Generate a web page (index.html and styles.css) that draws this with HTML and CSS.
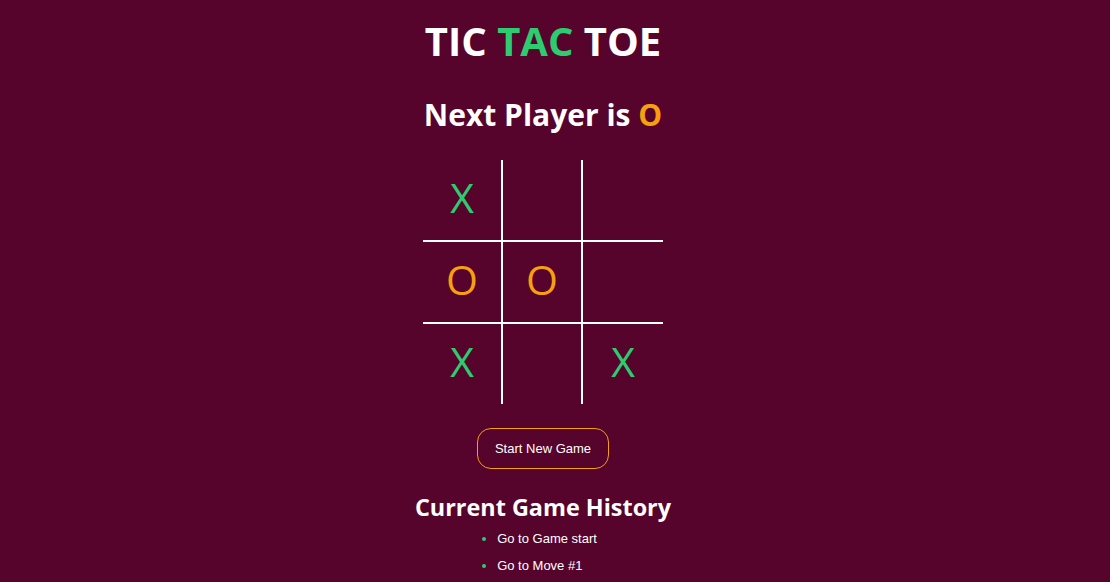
FILE: index.html
```html
<!DOCTYPE html>
<html lang="en">
<head>
<meta charset="utf-8">
<title>Tic Tac Toe</title>
<link rel="stylesheet" href="styles.css">
</head>
<body>
<main class="app">
  <h1 class="title">TIC <span class="green">TAC</span> TOE</h1>
  <h2 class="status">Next Player is <span class="orange">O</span></h2>
  <div class="board">
    <div class="cell b-r b-b x">X</div>
    <div class="cell b-r b-b"></div>
    <div class="cell b-b"></div>
    <div class="cell b-r b-b o">O</div>
    <div class="cell b-r b-b o">O</div>
    <div class="cell b-b"></div>
    <div class="cell b-r x">X</div>
    <div class="cell b-r"></div>
    <div class="cell x">X</div>
  </div>
  <button class="btn">Start New Game</button>
  <h2 class="history-title">Current Game History</h2>
  <ul class="history">
    <li>Go to Game start</li>
    <li>Go to Move #1</li>
  </ul>
</main>
</body>
</html>
```
FILE: styles.css
```css
html, body {
  margin: 0;
  padding: 0;
  background: #56042b;
  color: #ffffff;
}
.app {
  display: flex;
  flex-direction: column;
  align-items: center;
  padding-right: 24px;
  font-family: "Open Sans", sans-serif;
}
.title {
  margin: 15px 0 0;
  font-size: 40px;
  font-weight: 700;
  line-height: 52px;
}
.green { color: #2ecc71; }
.orange { color: #f5a00f; }
.status {
  margin: 28px 0 0;
  font-size: 30px;
  font-weight: 700;
  line-height: 40px;
}
.board {
  margin-top: 25px;
  display: grid;
  grid-template-columns: 80px 80px 80px;
  grid-template-rows: 82px 82px 80px;
}
.cell {
  box-sizing: border-box;
  display: flex;
  align-items: center;
  justify-content: center;
  padding-bottom: 6px;
  font-size: 41px;
  font-weight: 400;
}
.b-r { border-right: 2px solid #ffffff; }
.b-b { border-bottom: 2px solid #ffffff; }
.x { color: #2ecc71; }
.o { color: #f5a00f; }
.btn {
  margin-top: 24px;
  width: 132px;
  height: 41px;
  border: 1px solid #f5a00f;
  border-radius: 14px;
  background: transparent;
  color: #ffffff;
  font-family: "Liberation Sans", Arial, sans-serif;
  font-size: 13px;
  cursor: pointer;
}
.history-title {
  margin: 22px 0 0;
  font-size: 23.4px;
  font-weight: 700;
  line-height: 32px;
}
.history {
  margin: 2px 0 0;
  padding: 0 10px 0 18px;
  font-family: "Liberation Sans", Arial, sans-serif;
  font-size: 13px;
  list-style: disc;
}
.history li {
  line-height: 27px;
}
.history li::marker {
  color: #2ecc71;
}
```
